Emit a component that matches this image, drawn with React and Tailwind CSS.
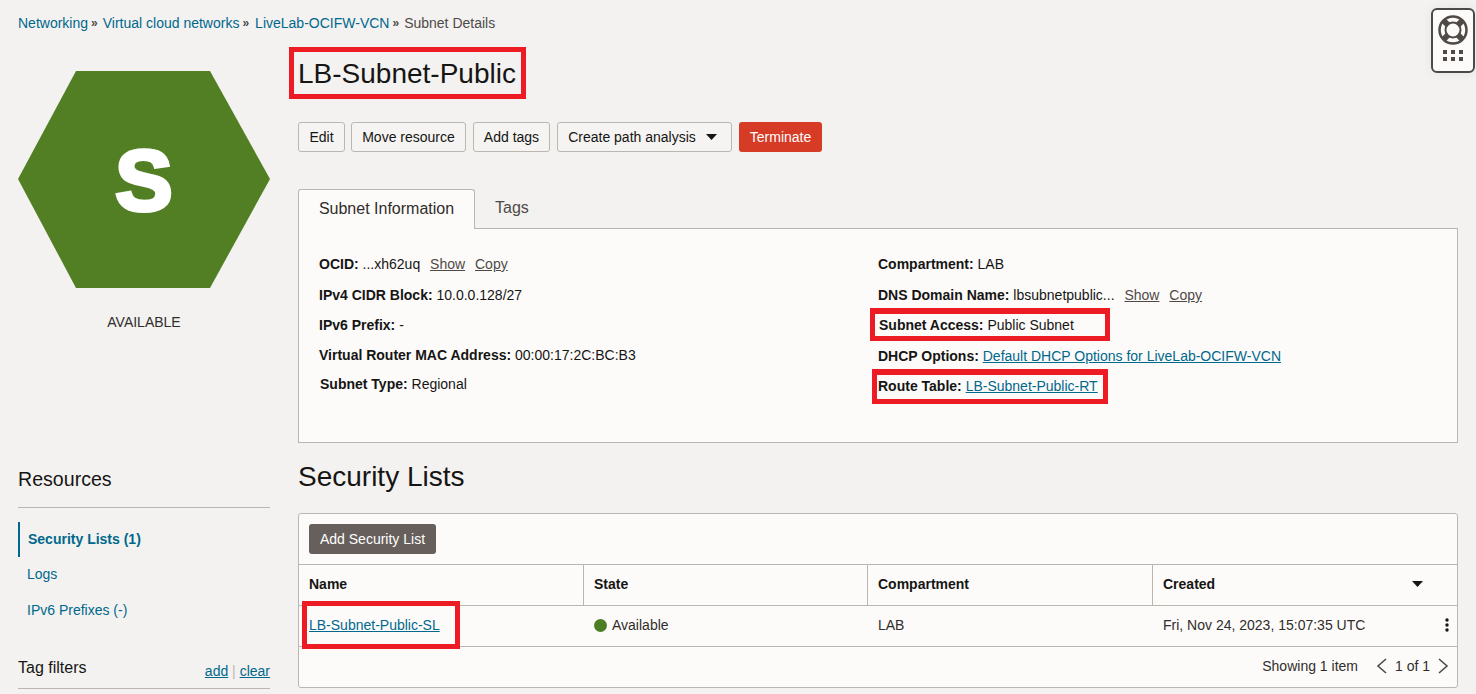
import React from "react";

const link = "text-[#00688c]";
const Btn = ({ children, className = "" }) => (
  <button className={`h-[30px] border border-[#bcb6b1] rounded-[3px] text-[14px] text-[#161513] bg-[#f5f4f2] flex items-center justify-center ${className}`}>{children}</button>
);
const RedBox = ({ className }) => <div className={`absolute border-[#ed1c24] pointer-events-none ${className}`} />;
const Row = ({ label, children, className = "" }) => (
  <div className={`text-[14px] leading-[17px] text-[#161513] whitespace-nowrap ${className}`}>
    <b className="font-bold">{label}</b> {children}
  </div>
);
const Action = ({ children }) => <a className="underline text-[#4f4a46] ml-[6px]">{children}</a>;
const Sep = ({ className = "mr-[5px]" }) => <span className={`text-[#4f4a46] ml-[3px] font-bold text-[12px] ${className}`}>»</span>;

export default function App() {
  return (
    <div className="relative h-[694px] overflow-hidden bg-[#f3f2f1] text-[#161513] text-[14px] font-['Liberation_Sans',Arial,sans-serif]">
      <nav className="pl-[18px] pt-[15px] h-[47px] text-[14px] leading-[17px] flex">
        <a className={link}>Networking</a><Sep />
        <a className={link}>Virtual cloud networks</a><Sep className="mr-[6px]" />
        <a className={link}>LiveLab-OCIFW-VCN</a><Sep />
        <span className="text-[#4f4a46]">Subnet Details</span>
      </nav>

      <div className="flex pl-[18px] pr-[18px]">
        <aside className="w-[252px] shrink-0 mr-[28px]">
          <div className="relative h-[218px] mt-[24px] flex items-center justify-center">
            <svg className="absolute inset-0" width="252" height="218" viewBox="0 0 252 218">
              <polygon points="0,108 58,0 192,0 252,108 192,217 58,217" fill="#537f24" />
            </svg>
            <span className="relative text-white font-bold text-[86px] leading-none [-webkit-text-stroke:4px_white]">S</span>
          </div>
          <div className="text-center text-[14px] leading-[17px] text-[#312d2a] mt-[25px]">AVAILABLE</div>

          <h2 className="text-[19.6px] leading-[24px] mt-[136px] pb-[16px] border-b border-[#bcb6b1]">Resources</h2>
          <ul className="mt-[14px] text-[14px]">
            <li className="h-[35px] flex items-center pl-[8px] border-l-2 border-[#00688c] font-bold text-[#00688c]">Security Lists (1)</li>
            <li className="h-[35px] flex items-center pl-[9px] text-[#00688c]">Logs</li>
            <li className="h-[36px] flex items-center pl-[9px] text-[#00688c]">IPv6 Prefixes (-)</li>
          </ul>
          <div className="mt-[28px] pb-[8px] flex items-end justify-between border-b border-[#bcb6b1]">
            <span className="text-[16px] leading-[24px]">Tag filters</span>
            <span className="text-[14px] leading-[17px] text-[#bcb6b1]">
              <a className={`underline ${link}`}>add</a> | <a className={`underline ${link}`}>clear</a>
            </span>
          </div>
        </aside>

        <main className="flex-1 min-w-0">
          <div className="relative h-[52px] flex items-center">
            <h1 className="text-[28px] leading-[34px] whitespace-nowrap pt-[2px]">LB-Subnet-Public</h1>
            <RedBox className="left-[-9px] top-0 w-[237px] h-[52px] border-[5px]" />
          </div>
          <div className="mt-[23px] flex">
            <Btn className="w-[47px]">Edit</Btn>
            <Btn className="w-[115px] ml-[6px]">Move resource</Btn>
            <Btn className="w-[77px] ml-[7px]">Add tags</Btn>
            <Btn className="w-[175px] ml-[7px] gap-[10px] pr-[4px]">
              Create path analysis
              <svg width="11" height="6" viewBox="0 0 11 6"><path d="M0 0h11L5.500 6z" fill="#161513" /></svg>
            </Btn>
            <button className="ml-[7px] h-[30px] w-[83px] rounded-[3px] text-[14px] text-white bg-[#d63b25]">Terminate</button>
          </div>

          <div className="mt-[37px] flex h-[40px]">
            <div className="w-[177px] h-[40px] pb-[2px] bg-[#fcfbfa] border border-[#bcb6b1] border-b-0 rounded-t-[3px] text-[16px] text-[#312d2a] flex items-center justify-center relative z-10">Subnet Information</div>
            <div className="px-[20px] pb-[2px] text-[16px] text-[#4f4a46] flex items-center">Tags</div>
          </div>

          <section className="-mt-px h-[215px] bg-[#fcfbfa] border border-[#bcb6b1] flex pl-[20px]">
            <div className="w-[559px] pt-[27px]">
              <Row label="OCID:">...xh62uq <Action>Show</Action> <Action>Copy</Action></Row>
              <Row label="IPv4 CIDR Block:" className="mt-[14px]">10.0.0.128/27</Row>
              <Row label="IPv6 Prefix:" className="mt-[13px]">-</Row>
              <Row label="Virtual Router MAC Address:" className="mt-[13px]">00:00:17:2C:BC:B3</Row>
              <Row label="Subnet Type:" className="mt-[12px] pl-px">Regional</Row>
            </div>
            <div className="pt-[27px]">
              <Row label="Compartment:">LAB</Row>
              <Row label="DNS Domain Name:" className="mt-[14px]">lbsubnetpublic... <Action>Show</Action> <Action>Copy</Action></Row>
              <Row label="Subnet Access:" className="mt-[13px] relative pl-px">
                Public Subnet
                <RedBox className="left-[-8px] top-[-9px] w-[240px] h-[33px] border-[5px] border-t-[6px]" />
              </Row>
              <Row label="DHCP Options:" className="mt-[14px]"><a className={`underline ${link}`}>Default DHCP Options for LiveLab-OCIFW-VCN</a></Row>
              <Row label="Route Table:" className="mt-[13px] relative">
                <a className={`underline ${link}`}>LB-Subnet-Public-RT</a>
                <RedBox className="left-[-6px] top-[-9px] w-[236px] h-[35px] border-[5px] border-t-[6px]" />
              </Row>
            </div>
          </section>

          <h2 className="text-[28px] leading-[34px] mt-[17px]">Security Lists</h2>

          <section className="mt-[19px] h-[175px] bg-[#fcfbfa] border border-[#bcb6b1] rounded-[3px]">
            <div className="h-[51px] pl-[10px] pt-[10px] border-b border-[#bcb6b1]">
              <button className="h-[30px] w-[127px] rounded-[3px] text-[14px] text-white bg-[#665f5b]">Add Security List</button>
            </div>
            <div className="grid grid-cols-[285px_284px_285px_1fr] h-[41px] border-b border-[#bcb6b1] font-bold text-[14px]">
              <div className="pl-[10px] pb-[2px] flex items-center border-r border-[#bcb6b1]">Name</div>
              <div className="pl-[10px] pb-[2px] flex items-center border-r border-[#bcb6b1]">State</div>
              <div className="pl-[10px] pb-[2px] flex items-center border-r border-[#bcb6b1]">Compartment</div>
              <div className="pl-[10px] pr-[34px] pb-[2px] flex items-center justify-between">
                Created
                <svg width="11" height="6" viewBox="0 0 11 6"><path d="M0 0h11L5.500 6z" fill="#161513" /></svg>
              </div>
            </div>
            <div className="grid grid-cols-[285px_284px_285px_1fr] h-[41px] border-b border-[#bcb6b1] text-[14px]">
              <div className="relative pl-[10px] pb-[2px] flex items-center">
                <a className={`underline ${link}`}>LB-Subnet-Public-SL</a>
                <RedBox className="left-[3px] top-[-5px] w-[158px] h-[48px] border-[5px]" />
              </div>
              <div className="pl-[10px] pb-[2px] flex items-center gap-[5px]">
                <span className="w-[13px] h-[13px] rounded-full bg-[#4c7d23]" />
                <span className="text-[#312d2a]">Available</span>
              </div>
              <div className="pl-[10px] pb-[2px] flex items-center text-[#312d2a]">LAB</div>
              <div className="pl-[10px] pr-[8px] pb-[2px] flex items-center justify-between text-[#312d2a]">
                Fri, Nov 24, 2023, 15:07:35 UTC
                <svg width="4" height="14" viewBox="0 0 4 14" fill="#161513"><circle cx="2" cy="2" r="1.700" /><circle cx="2" cy="7" r="1.700" /><circle cx="2" cy="12" r="1.700" /></svg>
              </div>
            </div>
            <div className="h-[40px] pb-[2px] flex items-center justify-end pr-[8px] text-[14px] text-[#312d2a]">
              Showing 1 item
              <svg className="ml-[18px]" width="11" height="16" viewBox="0 0 11 16" fill="none" stroke="#4f4a46" strokeWidth="1.600"><path d="M10 1L2 8l8 7" /></svg>
              <span className="mx-[8px]">1 of 1</span>
              <svg width="11" height="16" viewBox="0 0 11 16" fill="none" stroke="#4f4a46" strokeWidth="1.600"><path d="M1 1l8 7-8 7" /></svg>
            </div>
          </section>
        </main>
      </div>

      <div className="absolute left-[1431px] top-[8px] w-[44px] h-[65px] rounded-[6px] border-2 border-[#4a4a4a] bg-[#fcfbfa] flex flex-col items-center shadow-[0_0_12px_rgba(0,0,0,0.06)]">
        <svg className="mt-[5px] shrink-0" width="30" height="30" viewBox="0 0 30 30" fill="none">
          <path d="M5.500 5.500l6 6M24.500 5.500l-6 6M5.500 24.500l6-6M24.500 24.500l-6-6" stroke="#4f4a46" strokeWidth="6" />
          <circle cx="15" cy="15" r="13.500" stroke="#4f4a46" strokeWidth="2.500" />
          <circle cx="15" cy="15" r="7.500" fill="#fcfbfa" stroke="#4f4a46" strokeWidth="2" />
        </svg>
        <div className="mt-[5px] grid grid-cols-3 gap-x-[4px] gap-y-[3px]">
          {[0, 1, 2, 3, 4, 5].map((i) => <span key={i} className="w-[4px] h-[4px] bg-[#4f4a46]" />)}
        </div>
      </div>
    </div>
  );
}
